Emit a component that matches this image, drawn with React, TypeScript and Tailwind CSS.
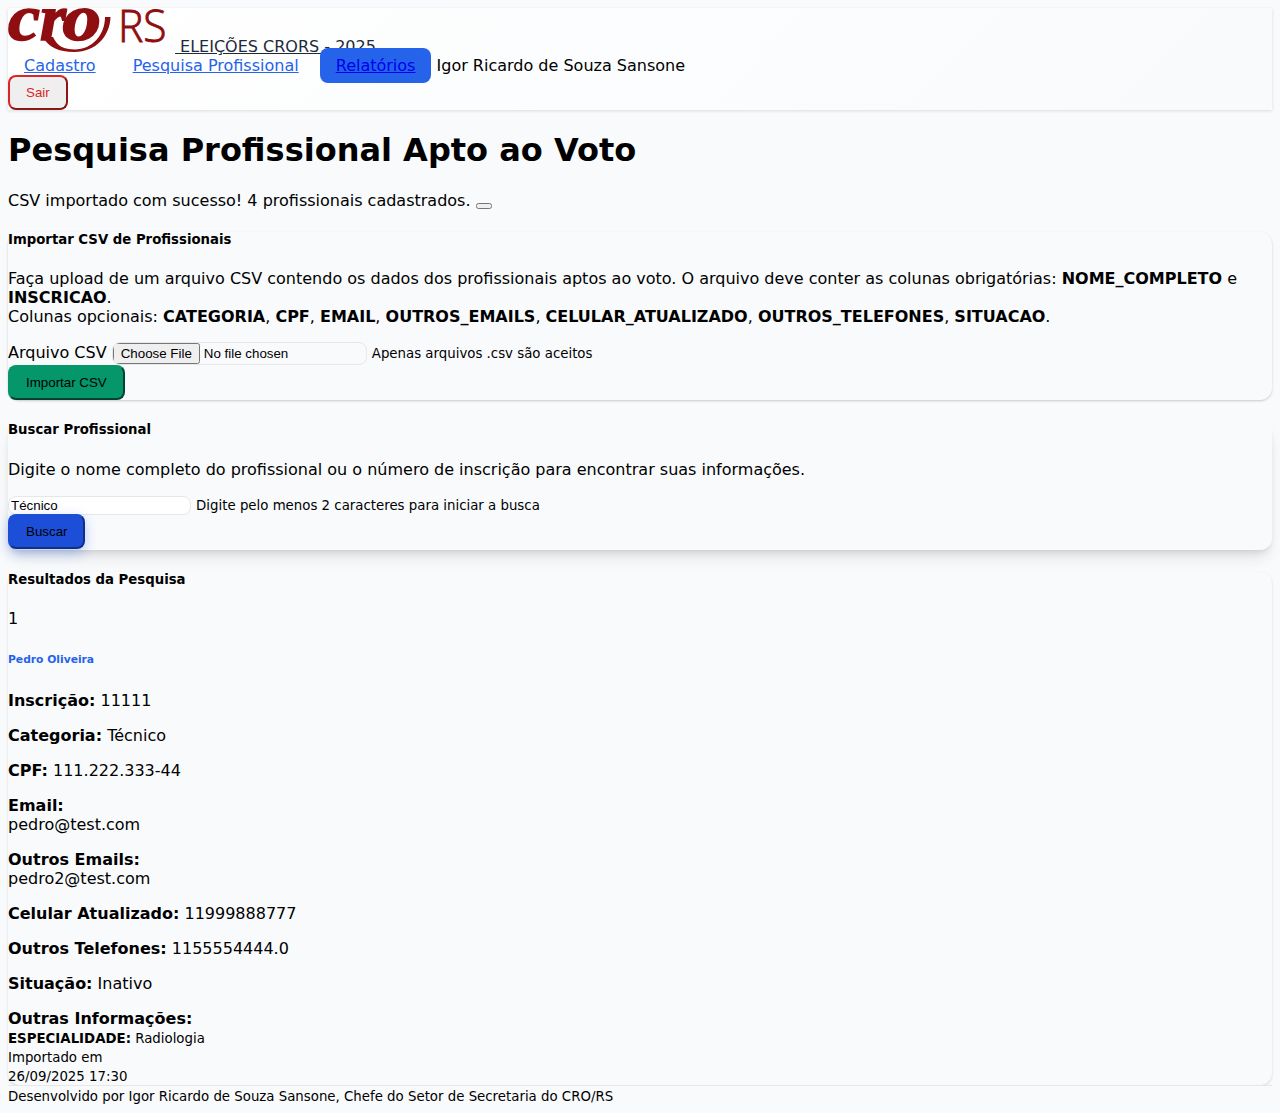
import React from "react";

const h5 = "my-[1.67em] text-[13.28px] font-bold";
const btn =
  "block rounded-lg border-2 [border-style:outset] px-4 py-2 font-['Liberation_Sans',Arial,sans-serif] text-[13.3333px]";

function Logo() {
  return (
    <svg
      className="mr-[10px] inline-block overflow-visible align-baseline"
      width="157"
      height="44"
      viewBox="0 0 157 44"
      fill="#8e0e12"
    >
      <g fontFamily="'Liberation Serif', serif" fontWeight="700" fontStyle="italic" stroke="#8e0e12" strokeWidth="1.6">
        <text x="0" y="32.200" fontSize="65" textLength="32" lengthAdjust="spacingAndGlyphs">c</text>
        <text x="32" y="32.200" fontSize="65" textLength="26" lengthAdjust="spacingAndGlyphs">r</text>
        <text x="54.500" y="32.200" fontSize="65" textLength="38.500" lengthAdjust="spacingAndGlyphs">o</text>
      </g>
      <path d="M35 29 C40 39 51 44 66 44 C89 44 102 27 102.500 9 L97 9 C97 27 84 41.500 67 41.500 C56 41.500 49 38 45 29Z" />
      <text
        x="110"
        y="33.700"
        fontSize="45"
        fontFamily="'Open Sans', sans-serif"
        fontWeight="300"
        stroke="#8e0e12"
        strokeWidth="0.9"
        textLength="48.500"
        lengthAdjust="spacingAndGlyphs"
      >
        RS
      </text>
    </svg>
  );
}

function Header() {
  return (
    <nav className="bg-linear-135 from-white to-[#f8fafc] shadow-[0_1px_3px_rgba(0,0,0,0.12)]">
      <a href="#" className="text-[#1e293b] underline">
        <Logo /> ELEIÇÕES CRORS - 2025
      </a>
      <div>
        <a href="#" className="rounded-lg px-4 py-2 text-[#2563eb] underline">Cadastro</a>{" "}
        <a href="#" className="rounded-lg px-4 py-2 text-[#2563eb] underline">Pesquisa Profissional</a>{" "}
        <a href="#" className="relative rounded-lg bg-[#2563eb] px-4 py-2 text-[#0000ee] underline">Relatórios</a>{" "}
        <span>Igor Ricardo de Souza Sansone</span>
      </div>
      <button className={`${btn} border-[#dc2626] bg-[#efefef] text-[#dc2626]`}>Sair</button>
    </nav>
  );
}

function ImportCard() {
  return (
    <section className="rounded-xl shadow-[0_1px_3px_rgba(0,0,0,0.1),0_1px_2px_rgba(0,0,0,0.1)]">
      <h5 className={h5}>Importar CSV de Profissionais</h5>
      <p className="my-4">
        Faça upload de um arquivo CSV contendo os dados dos profissionais aptos ao voto. O arquivo deve conter as colunas
        obrigatórias: <b>NOME_COMPLETO</b> e <b>INSCRICAO</b>.<br />
        Colunas opcionais: <b>CATEGORIA</b>, <b>CPF</b>, <b>EMAIL</b>, <b>OUTROS_EMAILS</b>, <b>CELULAR_ATUALIZADO</b>,{" "}
        <b>OUTROS_TELEFONES</b>, <b>SITUACAO</b>.
      </p>
      <div>
        <label>Arquivo CSV</label>{" "}
        <input
          type="file"
          className="align-baseline [all:revert] rounded-lg! border! border-solid! border-[#e5e7eb]! file:[all:revert]"
        />{" "}
        <small className="text-[13.3333px]">Apenas arquivos .csv são aceitos</small>
      </div>
      <button className={`${btn} border-[#059669] bg-[#059669] text-black`}>Importar CSV</button>
    </section>
  );
}

function SearchCard() {
  return (
    <section className="rounded-xl shadow-[0_10px_15px_-3px_rgba(0,0,0,0.1),0_4px_6px_-2px_rgba(0,0,0,0.1)]">
      <h5 className={h5}>Buscar Profissional</h5>
      <p className="my-4">Digite o nome completo do profissional ou o número de inscrição para encontrar suas informações.</p>
      <div>
        <input
          type="text"
          defaultValue="Técnico"
          className="w-[183px] rounded-lg border border-[#e5e7eb] bg-white px-[2px] py-px align-baseline font-['Liberation_Sans',Arial,sans-serif] text-[13.3333px]"
        />{" "}
        <small className="text-[13.3333px]">Digite pelo menos 2 caracteres para iniciar a busca</small>
      </div>
      <button
        className={`${btn} -translate-y-px border-[#1d4ed8] bg-[#1d4ed8] text-black shadow-[0_4px_12px_rgba(37,99,235,0.3)]`}
      >
        Buscar
      </button>
    </section>
  );
}

function Results() {
  return (
    <section className="rounded-xl shadow-[0_1px_3px_rgba(0,0,0,0.1),0_1px_2px_rgba(0,0,0,0.06)]">
      <h5 className={h5}>Resultados da Pesquisa</h5>
      <div>1</div>
      <h6 className="my-[2.33em] text-[10.72px] font-bold text-[#2563eb]">Pedro Oliveira</h6>
      <p className="my-4"><b>Inscrição:</b> 11111</p>
      <p className="my-4"><b>Categoria:</b> Técnico</p>
      <p className="my-4"><b>CPF:</b> 111.222.333-44</p>
      <p className="my-4"><b>Email:</b><br />pedro@test.com</p>
      <p className="my-4"><b>Outros Emails:</b><br />pedro2@test.com</p>
      <p className="my-4"><b>Celular Atualizado:</b> 11999888777</p>
      <p className="my-4"><b>Outros Telefones:</b> 1155554444.0</p>
      <p className="my-4"><b>Situação:</b> Inativo</p>
      <div className="mt-4"><b>Outras Informações:</b></div>
      <div><small className="text-[13.3333px]"><b>ESPECIALIDADE:</b> Radiologia</small></div>
      <div><small className="text-[13.3333px]">Importado em<br />26/09/2025 17:30</small></div>
    </section>
  );
}

export default function App() {
  return (
    <div className="flow-root min-h-[1113px] bg-[#f8fafc] p-2 font-['DejaVu_Sans',sans-serif] text-base leading-[normal] text-black [&_b]:font-bold [&_h5]:leading-[normal] [&_h6]:leading-[normal] [&_small]:leading-[normal]">
      <Header />
      <h1 className="my-[0.67em] text-[32px] leading-[normal] font-bold">Pesquisa Profissional Apto ao Voto</h1>
      <div>
        CSV importado com sucesso! 4 profissionais cadastrados. <button className="[all:revert]" aria-label="Fechar" />
      </div>
      <ImportCard />
      <SearchCard />
      <Results />
      <footer className="relative border-t border-[#e5e7eb] bg-[#f8fafc]">
        <small className="text-[13.3333px]">
          Desenvolvido por Igor Ricardo de Souza Sansone, Chefe do Setor de Secretaria do CRO/RS
        </small>
      </footer>
    </div>
  );
}
